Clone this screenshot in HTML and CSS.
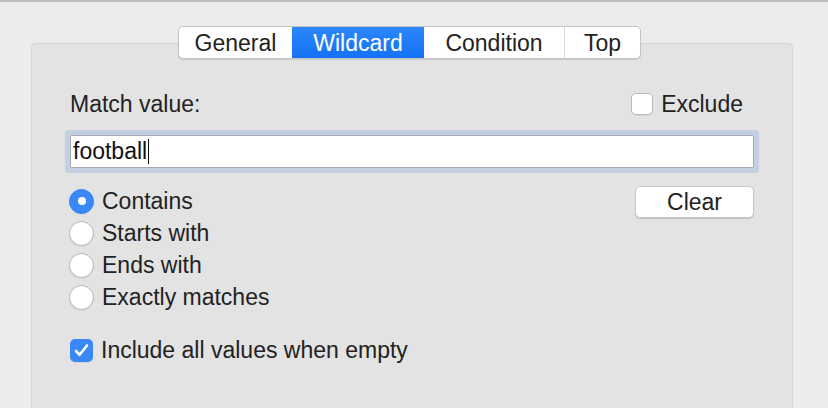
FILE: index.html
```html
<!DOCTYPE html>
<html lang="en">
<head>
<meta charset="utf-8">
<title>Wildcard filter</title>
<link rel="stylesheet" href="styles.css">
</head>
<body>
<div class="window">
  <div class="tabs">
    <div class="tab tab-general">General</div>
    <div class="tab tab-wildcard active">Wildcard</div>
    <div class="tab tab-condition">Condition</div>
    <div class="tab tab-top">Top</div>
  </div>
  <div class="panel">
    <div class="row-head">
      <span class="label">Match value:</span>
      <span class="check exclude"><span class="box"></span>Exclude</span>
    </div>
    <div class="field"><span class="value">football</span><span class="caret"></span></div>
    <div class="row-options">
      <div class="radios">
        <div class="radio"><span class="dot on"></span>Contains</div>
        <div class="radio"><span class="dot"></span>Starts with</div>
        <div class="radio"><span class="dot"></span>Ends with</div>
        <div class="radio"><span class="dot"></span>Exactly matches</div>
      </div>
      <button class="btn">Clear</button>
    </div>
    <div class="check include">
      <span class="box checked"><svg width="23" height="23" viewBox="0 0 23 23"><path d="M6 12 L9.6 15.8 L17 6.5" fill="none" stroke="#fff" stroke-width="2.6" stroke-linecap="round" stroke-linejoin="round"/></svg></span>Include all values when empty
    </div>
  </div>
</div>
</body>
</html>
```

FILE: styles.css
```css
html, body {
  margin: 0;
  height: 100%;
}

body {
  box-sizing: border-box;
  background: #ececec;
  border-top: 2px solid #bdbdbd;
  font-family: "Liberation Sans", Arial, sans-serif;
  font-size: 23px;
  color: #222;
  overflow: hidden;
}

.window {
  padding: 24px 35px 0 31px;
}

.tabs {
  position: relative;
  z-index: 1;
  display: flex;
  width: fit-content;
  margin: 0 0 -16px 147px;
  border: 1px solid #c4c4c4;
  border-radius: 5px;
  background: #fff;
  box-shadow: 0 1px 1px rgba(0, 0, 0, 0.12);
  overflow: hidden;
}

.tab {
  box-sizing: border-box;
  height: 31px;
  padding-top: 2px;
  line-height: 29px;
  text-align: center;
  color: #222;
}

.tab-general { width: 113px; }
.tab-wildcard { width: 132px; }
.tab-condition { width: 141px; border-right: 1px solid #d8d8d8; }
.tab-top { width: 75px; }

.tab.active {
  background: linear-gradient(#2b87fa, #1472f6);
  color: #fff;
}

.panel {
  box-sizing: border-box;
  height: 365px;
  padding: 48px 38px 0 38px;
  border: 1px solid #d4d4d4;
  border-bottom: none;
  border-radius: 5px 5px 0 0;
  background: #e3e3e3;
}

.row-head {
  display: flex;
  justify-content: space-between;
  align-items: center;
  height: 24px;
  padding-right: 11px;
}

.check {
  display: flex;
  align-items: center;
  gap: 8px;
}

.box {
  box-sizing: border-box;
  width: 22px;
  height: 22px;
  border: 1px solid #bababa;
  border-radius: 5px;
  background: #fff;
  box-shadow: 0 1px 1px rgba(0, 0, 0, 0.06);
}

.box.checked {
  width: 23px;
  height: 23px;
  border: none;
  background: #3a88f6;
  display: flex;
}

.field {
  box-sizing: border-box;
  display: flex;
  align-items: center;
  height: 33px;
  margin-top: 19px;
  padding-left: 2px;
  border: 1px solid #a4acb9;
  border-radius: 1px;
  background: #fff;
  box-shadow: 0 0 0 5px #c4d0e2;
  color: #111;
}

.caret {
  width: 1px;
  height: 25px;
  margin-left: 1px;
  background: #111;
}

.row-options {
  display: flex;
  justify-content: space-between;
  align-items: flex-start;
  margin-top: 17px;
}

.radio {
  display: flex;
  align-items: center;
  gap: 8px;
  height: 32px;
}

.dot {
  box-sizing: border-box;
  width: 25px;
  height: 25px;
  margin-left: -1px;
  border: 1px solid #b6b6b6;
  border-radius: 50%;
  background: #fff;
  box-shadow: 0 1px 1px rgba(0, 0, 0, 0.05);
  display: flex;
  align-items: center;
  justify-content: center;
}

.dot.on {
  border-color: #3182f3;
  background: #3a88f6;
}

.dot.on::after {
  content: "";
  width: 8px;
  height: 8px;
  border-radius: 50%;
  background: #fff;
}

.btn {
  box-sizing: border-box;
  width: 119px;
  height: 32px;
  margin-top: 1px;
  padding: 0;
  border: 1px solid #c8c8c8;
  border-radius: 5px;
  background: #fff;
  box-shadow: 0 1px 1px rgba(0, 0, 0, 0.15);
  font: inherit;
  color: #222;
}

.include {
  height: 32px;
  margin-top: 21px;
}
```
